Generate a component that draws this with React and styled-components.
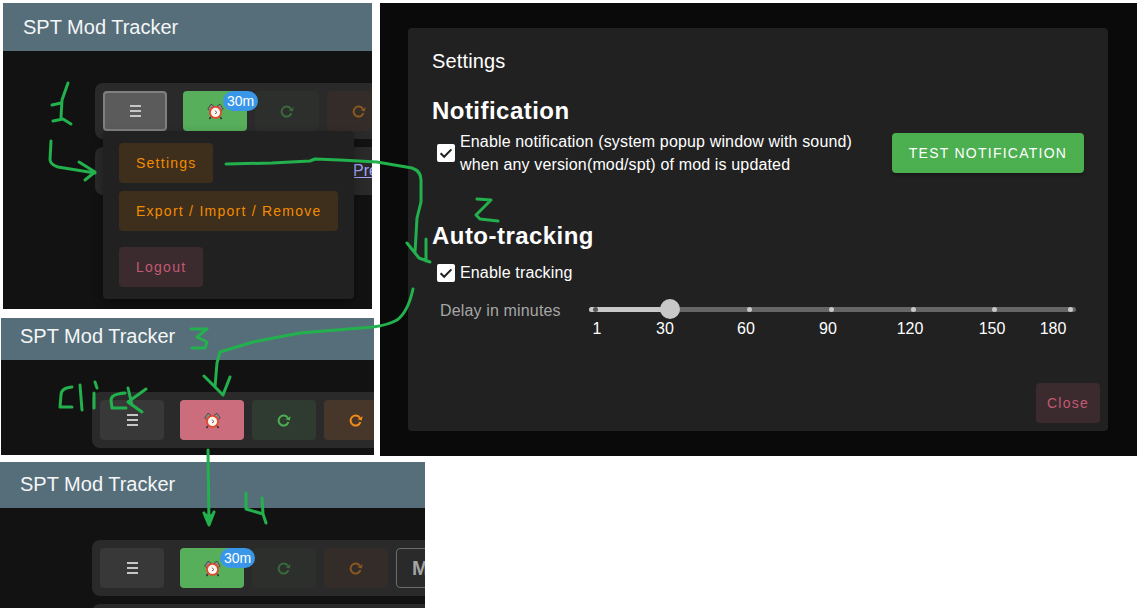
import React from "react";
import styled, { createGlobalStyle } from "styled-components";

const Global = createGlobalStyle`
  html, body { margin: 0; padding: 0; background: #fff; }
  body { font-family: "Liberation Sans", Arial, sans-serif; width: 1144px; height: 608px; overflow: hidden; }
  * { box-sizing: border-box; }
`;

const Canvas = styled.div`position: relative; width: 1144px; height: 608px; overflow: hidden; background: #fff;`;

const Shot = styled.section`
  position: absolute;
  left: ${p => p.$x}px; top: ${p => p.$y}px; width: ${p => p.$w}px; height: ${p => p.$h}px;
  overflow: hidden; background: #121212; color: #fff;
`;
const AppBar = styled.header`
  height: ${p => p.$h}px; background: #566e7a; display: flex; align-items: center;
  padding-left: ${p => p.$pad}px; padding-bottom: ${p => p.$pb || 0}px; font-size: 20px; color: #f4f6f7;
`;
const Content = styled.div`
  width: 600px; margin-left: ${p => p.$left}px; padding-top: 32px;
  display: flex; flex-direction: column; gap: 8px; position: relative;
`;
const Card = styled.div`
  background: #2a2a2a; border-radius: 8px 0 0 8px; height: ${p => p.$h || 56}px;
  display: flex; align-items: center; padding: 0 8px; position: relative;
`;
const ToolBtn = styled.button`
  width: 64px; height: 40px; flex: none; padding: 0; font: inherit; border-radius: 4px;
  display: flex; align-items: center; justify-content: center; position: relative;
  margin-left: ${p => p.$ml || 0}px; z-index: ${p => (p.$raised ? 1 : 0)};
  background: ${p => p.$bg}; border: ${p => p.$border || "none"}; color: ${p => p.$fg || "#fff"};
`;
const Bars = styled.span`
  display: flex; flex-direction: column; gap: 3px; width: 11px;
  & > i { display: block; height: 2px; background: #c6c6c6; }
`;
const Badge = styled.span`
  position: absolute; right: -11px; top: 0; width: 35px; height: 20px; border-radius: 10px; text-align: center;
  background: #3a97e8; color: #fff; font-size: 14px; line-height: 20px;
`;
const Tall = styled(ToolBtn)`
  margin-left: 8px; border: 1px solid #6c6c6c; background: #2a2a2a; color: #a4a4a4;
  font-size: 20px; font-weight: 700; justify-content: flex-start; padding-left: 15px; width: 120px;
`;
const PrevLink = styled.a`
  margin-left: 250px; font-size: 16px; color: #a5a5ff; text-decoration: underline;
`;
const Menu = styled.nav`
  position: absolute; left: 8px; top: 80px; width: 251px; height: 168px; background: #212121;
  border-radius: 4px; padding: 12px 16px; display: flex; flex-direction: column; align-items: flex-start;
  box-shadow: 0 5px 12px rgba(0,0,0,.35); z-index: 2;
`;
const MenuBtn = styled.button`
  height: 40px; padding: 0 16.5px 0 17px; border: none; border-radius: 4px; font: inherit; font-size: 14px;
  white-space: nowrap; letter-spacing: 1.25px; margin-bottom: ${p => p.$mb}px; flex: none;
  background: ${p => p.$bg}; color: ${p => p.$fg};
`;
const Backdrop = styled.section`
  position: absolute; left: 380px; top: 3px; width: 757px; height: 453px; background: #0a0a0a; padding: 25px 29px 0 28px;
`;
const Dialog = styled.div`
  height: 403px; background: #212121; border-radius: 4px; padding: 0 24px; color: #fff; position: relative;
  display: flex; flex-direction: column;
`;
const DialogTitle = styled.h2`margin: 0; padding-top: 21px; font-size: 20px; line-height: 24px; font-weight: 400; letter-spacing: .15px;`;
const SectionTitle = styled.h3`
  margin: ${p => p.$mt}px 0 0; font-size: 24px; line-height: 28px; font-weight: 700; letter-spacing: .46px;
`;
const NoteRow = styled.div`display: flex; align-items: center; justify-content: space-between; margin-top: 5px;`;
const CheckRow = styled.label`display: flex; align-items: center; font-size: 16px; line-height: 23px; letter-spacing: .15px; margin-top: ${p => p.$mt || 0}px;`;
const Box = styled.span`
  width: 18px; height: 18px; margin: 0 5px; border-radius: 2px; background: #fff; flex: none;
  display: flex; align-items: center; justify-content: center;
`;
const TestBtn = styled.button`
  width: 192px; height: 40px; border: none; border-radius: 4px; background: #4caf50; color: #fff;
  font: inherit; font-size: 14px; letter-spacing: 1.25px; box-shadow: 0 2px 3px rgba(0,0,0,.3);
`;
const DelayRow = styled.div`display: flex; margin-top: 14px; padding-left: 8px;`;
const DelayLabel = styled.span`font-size: 16px; line-height: 24px; letter-spacing: .15px; color: #a6a6a6; width: 149px; flex: none; margin-top: 1px;`;
const SliderWrap = styled.div`position: relative; width: 487px; height: 36px;`;
const Rail = styled.div`position: absolute; left: 0; right: 0; top: 9px; height: 5px; background: #666; border-radius: 3px;`;
const Fill = styled.div`position: absolute; left: 0; top: 9px; height: 5px; width: 80px; background: #c8c8c8; border-radius: 3px;`;
const Tick = styled.i`
  position: absolute; top: 9px; width: 5px; height: 5px; margin-left: -2.5px; border-radius: 50%;
  background: ${p => (p.$on ? "#555" : "#c8c8c8")};
`;
const Thumb = styled.div`position: absolute; left: 71px; top: 1px; width: 20px; height: 20px; border-radius: 50%; background: #c8c8c8;`;
const Mark = styled.span`position: absolute; top: 21px; font-size: 16px; line-height: 20px; color: #fff; transform: translateX(-50%);`;
const CloseBtn = styled.button`
  position: absolute; right: 8px; bottom: 8px; width: 64px; height: 40px; border: none; border-radius: 4px;
  background: #3b2a2e; color: #c25b72; font: inherit; font-size: 14px; letter-spacing: 1.25px;
`;
const Overlay = styled.svg`position: absolute; inset: 0; pointer-events: none; z-index: 5;`;

const Clock = () => (
  <svg width="17" height="17" viewBox="0 0 17 17">
    <path d="M.8 6 4 1.2 7 3.2 2.4 7.4Z M16.2 6 13 1.2 10 3.2 14.6 7.4Z" fill="#8a8a8a" stroke="#333" strokeWidth=".7" />
    <path d="M3.8 14 2.4 16.2 M13.2 14 14.6 16.2" stroke="#333" strokeWidth="1.5" />
    <circle cx="8.5" cy="9.4" r="6.4" fill="#e2482c" />
    <circle cx="8.5" cy="9.4" r="4.6" fill="#fdf5ef" />
    <path d="M7.8 7.6 10 9.5 8 10.9" fill="none" stroke="#666" strokeWidth="1" />
  </svg>
);
const Redo = ({ c, o = 1 }) => (
  <svg width="14" height="13" viewBox="0 0 14 13" fill="none" opacity={o}>
    <path d="M10.8 3.8A5 5 0 1 0 11.4 8" stroke={c} strokeWidth="2" />
    <path d="M13.6 2.2 12.8 6.4 8.4 5.2Z" fill={c} />
  </svg>
);
const Hamburger = () => <Bars><i /><i /><i /></Bars>;
const Check = () => (
  <svg width="14" height="14" viewBox="0 0 14 14"><path d="M1.6 7.2 5.2 10.8 12.4 3.4" fill="none" stroke="#222" strokeWidth="2" /></svg>
);

const Toolbar = ({ menu, alarm, dim, extra }) => (
  <Card>
    <ToolBtn $bg={menu ? "#5b5b5b" : "#383838"} $border={menu ? "2px solid #808080" : "none"}><Hamburger /></ToolBtn>
    <ToolBtn $ml={16} $raised $bg={alarm === "pink" ? "#cc6d7e" : "#57ae5b"}>
      <Clock />
      {alarm !== "pink" && <Badge>30m</Badge>}
    </ToolBtn>
    <ToolBtn $ml={8} $bg={dim ? "#2c2f2c" : "#2f3b30"}><Redo c="#4caf50" o={dim ? 0.45 : 1} /></ToolBtn>
    <ToolBtn $ml={8} $bg={dim ? "#332c28" : "#46372a"}><Redo c="#f28c18" o={dim ? 0.45 : 1} /></ToolBtn>
    {extra && <Tall $bg="#2a2a2a">Mods</Tall>}
  </Card>
);

const strokes = [
  "M68 83 62 100 61 117 M52 105 61 103 M53 121 63 119 71 124",
  "M51 141 50 160 Q51 165 58 167 L95 173 M79 162 95 172 85 180",
  "M226 164 272 163 310 161 315 159 340 160 377 162 412 168 Q421 171 421 180 L421 202 417 218 415 253 M407 243 419 258 430 262 M426 239 426 261",
  "M477 199 491 200 476 215 480 219 498 221",
  "M413 289 Q408 312 397 320 Q388 325 373 327 L300 333 253 342 220 352 217 363 215 387 M204 376 223 395 230 377",
  "M191 329 207 329 197 337 207 342 205 348 192 348",
  "M72 387 Q61 388 61 395 L60 407 72 407 M80 385 82 410 M95 382 97 388 M94 393 94 408 M125 393 Q111 394 111 400 L112 408 126 408 M128 388 132 405 M146 389 128 402 142 412",
  "M208 450 209 525 M204 513 209 525 214 512 M206 515 209 522 212 515",
  "M246 493 246 509 263 514 266 523 M262 498 263 514",
];

const marks = [["1", 8], ["30", 76], ["60", 157], ["90", 239], ["120", 321], ["150", 403], ["180", 464]];
const ticks = [6, 160, 242, 324, 405, 481];

export default function App() {
  return (
    <Canvas>
      <Global />
      <Shot $x={3} $y={3} $w={369} $h={306}>
        <AppBar $h={48} $pad={20}>SPT Mod Tracker</AppBar>
        <Content $left={92}>
          <Toolbar menu alarm="green" dim />
          <Card $h={48}><PrevLink>Prev</PrevLink></Card>
          <Menu>
            <MenuBtn $bg="#3e2e1c" $fg="#f28c00" $mb={8}>Settings</MenuBtn>
            <MenuBtn $bg="#3e2e1c" $fg="#f28c00" $mb={16}>Export / Import / Remove</MenuBtn>
            <MenuBtn $bg="#3b2a2e" $fg="#c25b72" $mb={0}>Logout</MenuBtn>
          </Menu>
        </Content>
      </Shot>

      <Shot $x={1} $y={318} $w={373} $h={137}>
        <AppBar $h={42} $pad={19} $pb={6}>SPT Mod Tracker</AppBar>
        <Content $left={91}>
          <Toolbar alarm="pink" />
        </Content>
      </Shot>

      <Shot $x={0} $y={462} $w={425} $h={146}>
        <AppBar $h={46} $pad={20} $pb={2}>SPT Mod Tracker</AppBar>
        <Content $left={92}>
          <Toolbar alarm="green" dim extra />
          <Card />
        </Content>
      </Shot>

      <Backdrop>
        <Dialog>
          <DialogTitle>Settings</DialogTitle>
          <SectionTitle $mt={24}>Notification</SectionTitle>
          <NoteRow>
            <CheckRow>
              <Box><Check /></Box>
              <span>Enable notification (system popup window with sound)<br />when any version(mod/spt) of mod is updated</span>
            </CheckRow>
            <TestBtn>TEST NOTIFICATION</TestBtn>
          </NoteRow>
          <SectionTitle $mt={46}>Auto-tracking</SectionTitle>
          <CheckRow $mt={11}><Box><Check /></Box>Enable tracking</CheckRow>
          <DelayRow>
            <DelayLabel>Delay in minutes</DelayLabel>
            <SliderWrap>
              <Rail />
              <Fill />
              {ticks.map((t, i) => <Tick key={t} $on={i === 0} style={{ left: t }} />)}
              <Thumb />
              {marks.map(([l, x]) => <Mark key={l} style={{ left: x }}>{l}</Mark>)}
            </SliderWrap>
          </DelayRow>
          <CloseBtn>Close</CloseBtn>
        </Dialog>
      </Backdrop>

      <Overlay width="1144" height="608" viewBox="0 0 1144 608" fill="none" stroke="#22b14c" strokeWidth="3" strokeLinecap="round" strokeLinejoin="round">
        {strokes.map(d => <path key={d} d={d} />)}
      </Overlay>
    </Canvas>
  );
}
